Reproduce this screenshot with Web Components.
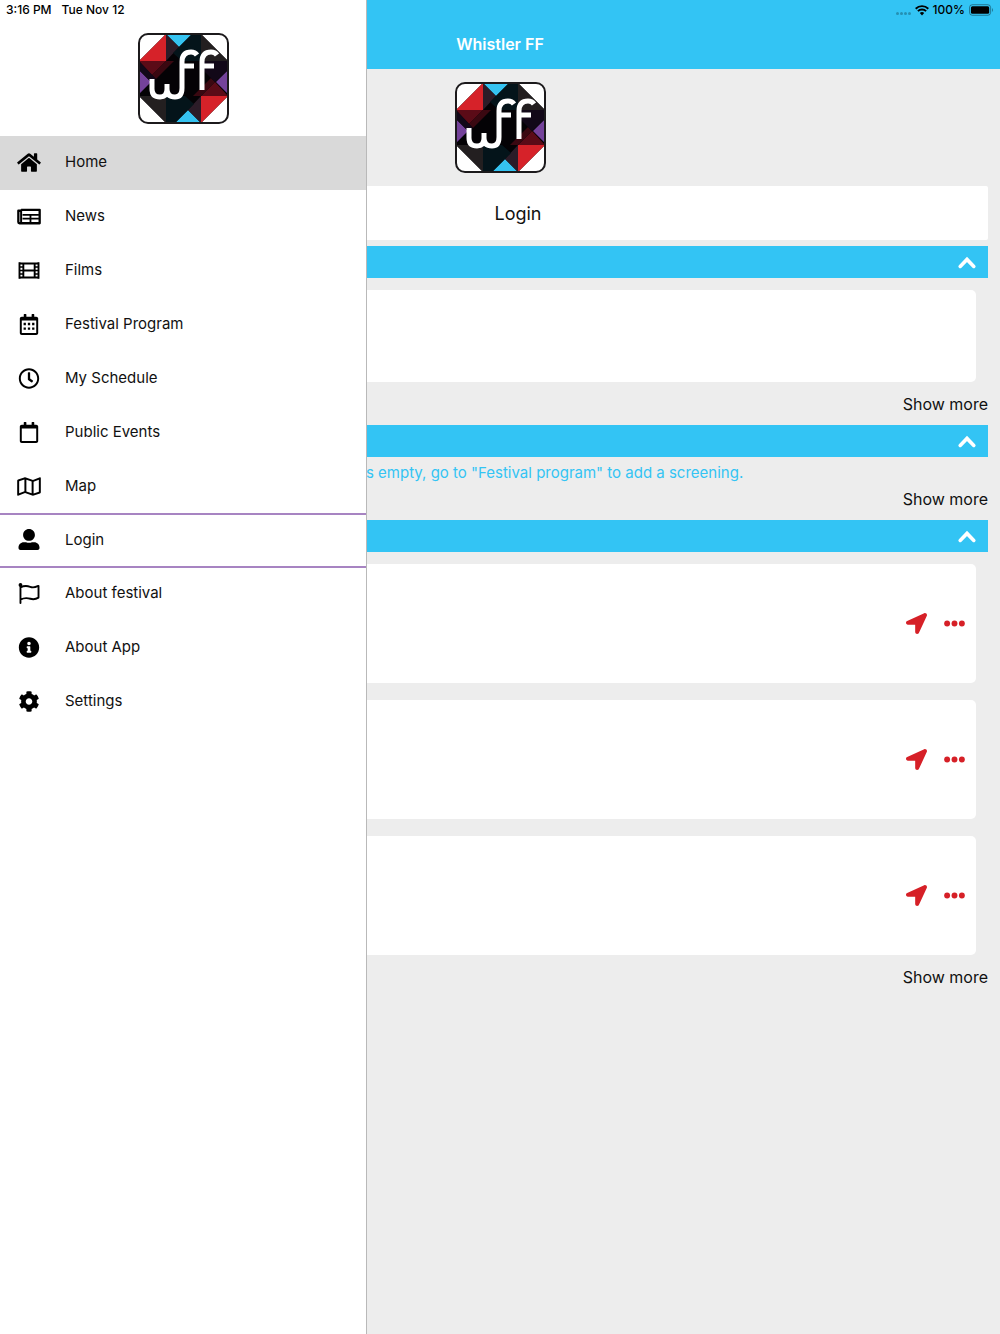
<!DOCTYPE html>
<html lang="en">
<head>
<meta charset="utf-8">
<meta name="viewport" content="width=device-width, initial-scale=1">
<title>Whistler FF</title>
<style>
html, body {
	margin: 0;
	min-height: 100%;
}
body {
	--accent: #33c4f4;
	--action: #d62027;
	--divider: #a784c2;
	background-color: #ededed;
	color: #111;
	font-family: Inter, "Liberation Sans", sans-serif;
	font-size: 16px;
	line-height: 20px;
}
</style>
</head>
<body>
<ff-app>
	<ff-status slot="status"></ff-status>
	<ff-drawer slot="drawer">
		<ff-item icon="home" href="#home" active>Home</ff-item>
		<ff-item icon="news" href="#news">News</ff-item>
		<ff-item icon="film" href="#films">Films</ff-item>
		<ff-item icon="program" href="#program">Festival Program</ff-item>
		<ff-item icon="clock" href="#schedule">My Schedule</ff-item>
		<ff-item icon="calendar" href="#events">Public Events</ff-item>
		<ff-item icon="map" href="#map">Map</ff-item>
		<ff-item icon="user" href="#login" divided>Login</ff-item>
		<ff-item icon="flag" href="#festival">About festival</ff-item>
		<ff-item icon="info" href="#app">About App</ff-item>
		<ff-item icon="cog" href="#settings">Settings</ff-item>
	</ff-drawer>
	<ff-login slot="login">Login</ff-login>
	<ff-section label="News">
		<ff-card></ff-card>
	</ff-section>
	<ff-section label="My Schedule">
		<ff-message>Your schedule is empty, go to "Festival program" to add a screening.</ff-message>
	</ff-section>
	<ff-section label="Public Events">
		<ff-card event></ff-card>
		<ff-card event></ff-card>
		<ff-card event></ff-card>
	</ff-section>
</ff-app>

<script>
'use strict';

const ICONS = {
	home: ['0 0 576 512', '<path d="M280.37 148.26L96 300.11V464a16 16 0 0 0 16 16l112.06-.29a16 16 0 0 0 15.92-16V368a16 16 0 0 1 16-16h64a16 16 0 0 1 16 16v95.64a16 16 0 0 0 16 16.05L464 480a16 16 0 0 0 16-16V300L295.67 148.26a12.19 12.19 0 0 0-15.3 0zM571.6 251.47L488 182.56V44.05a12 12 0 0 0-12-12h-56a12 12 0 0 0-12 12v72.61L318.47 43a48 48 0 0 0-61 0L4.34 251.47a12 12 0 0 0-1.6 16.9l25.5 31A12 12 0 0 0 45.15 301l235.22-193.74a12.19 12.19 0 0 1 15.3 0L530.9 301a12 12 0 0 0 16.9-1.6l25.5-31a12 12 0 0 0-1.7-16.93z"/>'],
	news: ['0 0 576 512', '<path fill="none" stroke="currentColor" stroke-width="56" stroke-linejoin="round" d="M96 92H548V420H56Q28 420 28 392V116H96"/><path fill="none" stroke="currentColor" stroke-width="48" d="M96 92V400"/><path fill="none" stroke="currentColor" stroke-width="44" d="M130 216H530M130 310H530M324 216V400"/>'],
	film: ['0 0 512 512', '<path fill="none" stroke="currentColor" stroke-width="46" d="M24 54V458M488 54V458M118 76V436M394 76V436"/><path fill="none" stroke="currentColor" stroke-width="48" d="M24 86H488M118 256H394M24 426H488"/><path fill="none" stroke="currentColor" stroke-width="34" d="M24 170H118M24 256H118M24 342H118M394 170H488M394 256H488M394 342H488"/>'],
	calendar: ['0 0 448 512', '<path d="M400 64h-48V12c0-6.6-5.4-12-12-12h-40c-6.6 0-12 5.4-12 12v52H160V12c0-6.6-5.4-12-12-12h-40c-6.6 0-12 5.4-12 12v52H48C21.5 64 0 85.5 0 112v352c0 26.5 21.5 48 48 48h352c26.5 0 48-21.5 48-48V112c0-26.5-21.5-48-48-48zm-6 400H54c-3.3 0-6-2.7-6-6V160h352v298c0 3.3-2.7 6-6 6z"/>'],
	clock: ['0 0 512 512', '<path d="M256 8C119 8 8 119 8 256s111 248 248 248 248-111 248-248S393 8 256 8zm0 448c-110.5 0-200-89.5-200-200S145.5 56 256 56s200 89.5 200 200-89.5 200-200 200zm61.8-104.4l-84.9-61.7c-3.1-2.3-4.9-5.9-4.9-9.7V116c0-6.6 5.4-12 12-12h32c6.6 0 12 5.4 12 12v141.7l66.8 48.6c5.4 3.9 6.5 11.4 2.6 16.8L334.6 349c-3.9 5.3-11.4 6.5-16.8 2.6z"/>'],
	map: ['0 0 576 512', '<path d="M560.02 32c-1.96 0-3.98.37-5.96 1.16L384.01 96H384L212 35.28A64.252 64.252 0 0 0 191.76 32c-6.69 0-13.37 1.05-19.81 3.14L20.12 87.95A32.006 32.006 0 0 0 0 117.66v346.32C0 473.17 7.53 480 15.99 480c1.96 0 3.97-.37 5.96-1.16L192 416l172 60.71a63.98 63.98 0 0 0 40.05.15l151.83-52.81A31.996 31.996 0 0 0 576 394.34V48.02c0-9.19-7.53-16.02-15.98-16.02zM224 90.42l128 45.19v285.97l-128-45.19V90.42zM48 418.05V129.07l128-44.53v286.2l-.64.23L48 418.05zm480-35.13l-128 44.53V141.26l.64-.24L528 93.95v288.97z"/>'],
	user: ['0 0 512 512', '<path d="M256 288c79.5 0 144-64.5 144-144S335.5 0 256 0 112 64.5 112 144s64.5 144 144 144zm128 32h-55.1c-22.2 10.2-46.9 16-72.9 16s-50.6-5.8-72.9-16H128C57.3 320 0 377.3 0 448v16c0 26.5 21.5 48 48 48h416c26.5 0 48-21.5 48-48v-16c0-70.7-57.3-128-128-128z"/>'],
	flag: ['0 0 512 512', '<circle cx="48" cy="46" r="46"/><path fill="none" stroke="currentColor" stroke-width="46" stroke-linecap="round" stroke-linejoin="round" d="M48 44V488M48 104C190 40 250 84 320 104C380 120 430 96 488 70V356C400 410 350 402 290 384C220 362 150 350 48 404"/>'],
	info: ['0 0 512 512', '<path d="M256 8C119.043 8 8 119.083 8 256c0 136.997 111.043 248 248 248s248-111.003 248-248C504 119.083 392.957 8 256 8zm0 110c23.196 0 42 18.804 42 42s-18.804 42-42 42-42-18.804-42-42 18.804-42 42-42zm56 254c0 6.627-5.373 12-12 12h-88c-6.627 0-12-5.373-12-12v-24c0-6.627 5.373-12 12-12h12v-64h-12c-6.627 0-12-5.373-12-12v-24c0-6.627 5.373-12 12-12h64c6.627 0 12 5.373 12 12v100h12c6.627 0 12 5.373 12 12v24z"/>'],
	cog: ['0 0 512 512', '<path d="M487.4 315.7l-42.6-24.6c4.3-23.2 4.3-47 0-70.2l42.6-24.6c4.9-2.8 7.1-8.6 5.5-14-11.1-35.6-30-67.8-54.7-94.6-3.8-4.1-10-5.1-14.8-2.3L380.8 110c-17.9-15.4-38.5-27.3-60.8-35.1V25.8c0-5.6-3.9-10.5-9.4-11.7-36.7-8.2-74.3-7.8-109.2 0-5.5 1.2-9.4 6.1-9.4 11.7V75c-22.2 7.9-42.8 19.8-60.8 35.1L88.7 85.5c-4.9-2.8-11-1.9-14.8 2.3-24.7 26.7-43.6 58.9-54.7 94.6-1.7 5.4.6 11.2 5.5 14L67.3 221c-4.3 23.2-4.3 47 0 70.2l-42.6 24.6c-4.9 2.8-7.1 8.6-5.5 14 11.1 35.6 30 67.8 54.7 94.6 3.8 4.1 10 5.1 14.8 2.3l42.6-24.6c17.9 15.4 38.5 27.3 60.8 35.1v49.2c0 5.6 3.9 10.5 9.4 11.7 36.7 8.2 74.3 7.8 109.2 0 5.5-1.2 9.4-6.1 9.4-11.7v-49.2c22.2-7.9 42.8-19.8 60.8-35.1l42.6 24.6c4.9 2.8 11 1.9 14.8-2.3 24.7-26.7 43.6-58.9 54.7-94.6 1.5-5.5-.7-11.3-5.6-14.1zM256 336c-44.1 0-80-35.9-80-80s35.9-80 80-80 80 35.9 80 80-35.9 80-80 80z"/>'],
	arrow: ['0 0 512 512', '<path d="M444.52 3.52L28.74 195.42c-47.97 22.39-31.98 92.75 19.19 92.75h175.91v175.91c0 51.17 70.36 67.17 92.75 19.19l191.9-415.78c15.99-38.39-25.59-79.97-63.97-63.97z"/>'],
	more: ['0 0 512 512', '<circle cx="76" cy="256" r="72"/><circle cx="256" cy="256" r="72"/><circle cx="436" cy="256" r="72"/>'],
	up: ['0 0 24 24', '<path fill="none" stroke="currentColor" stroke-width="3.6" stroke-linecap="round" d="M5.2 16.4L12 9.4L18.8 16.4"/>'],
	wifi: ['0 0 14 11', '<path d="M7 10.4L4.8 8A3.2 3.2 0 0 1 9.2 8Z"/><path fill="none" stroke="currentColor" stroke-width="1.9" d="M2.9 6.2A5.8 5.8 0 0 1 11.1 6.2M.7 3.7A9 9 0 0 1 13.3 3.7"/>'],
	battery: ['0 0 26 12', '<rect x=".5" y=".5" width="22" height="11" rx="3" fill="none" stroke="currentColor" opacity=".4"/><rect x="2" y="2" width="19" height="8" rx="1.6"/><path opacity=".4" d="M24 4Q26 6 24 8Z"/>'],
};
ICONS.program = [ICONS.calendar[0], ICONS.calendar[1] + '<path d="M92 216h56v56H92zM196 216h56v56h-56zM300 216h56v56h-56zM92 328h56v56H92zM196 328h56v56h-56zM300 328h56v56h-56z"/>'];

function define(name, html, setup){
	customElements.define(name, class extends HTMLElement{
		constructor(){
			super();
			this.attachShadow({mode: 'open'}).innerHTML = html;
		}
		connectedCallback(){
			if(setup) setup(this, this.shadowRoot);
		}
	});
}


define('ff-icon', '', (el, root)=>{
	let [box, shape] = ICONS[el.getAttribute('name')];
	root.innerHTML = `
<style>
:host { display: block; width: 24px; height: 21px; }
svg { display: block; width: 100%; height: 100%; fill: currentColor; }
</style>
<svg viewBox="${box}" aria-hidden="true">${shape}</svg>`;
});


define('ff-logo', `
<style>
:host { display: block; width: 91px; height: 91px; }
svg { display: block; width: 100%; height: 100%; }
</style>
<svg viewBox="0 0 91 91" role="img" aria-label="WFF">
	<rect x="1" y="1" width="89" height="89" rx="9" fill="#fff"/>
	<path fill="#040205" d="M28 1H63L90 28V63L63 90H28L1 63V28Z"/>
	<path fill="#d62229" d="M28 1V28H1ZM63 90V63H90Z"/>
	<path fill="#35c3f1" d="M28 1H54L41 14ZM63 90H37L50 77Z"/>
	<path fill="#74429a" d="M1 37V61L13 49ZM90 61V37L78 49Z"/>
	<path fill="#5b0b17" d="M1 28H28L14 42ZM90 63H63L77 49Z"/>
	<path fill="#2c1c28" d="M28 1L41 14L28 28ZM63 90L50 77L63 63Z"/>
	<path fill="#3a0811" d="M28 28L14 42L18 46L36 28ZM63 63L77 49L73 45L55 63Z"/>
	<path fill="#04141a" d="M54 1H63V28H44L35 20ZM37 90H28V63H47L56 71Z"/>
	<path fill="#231f20" d="M63 1L90 28H63ZM28 90L1 63H28Z"/>
	<path fill="#120818" d="M90 28H63V35L77 49L90 37ZM1 28V37L13 49L18 46Z"/>
	<rect x="1" y="1" width="89" height="89" rx="9" fill="none" stroke="#1c1a1c" stroke-width="2"/>
	<g fill="none" stroke="#fff" stroke-width="5">
		<path stroke-linejoin="round" d="M14 46V56Q14 64 22 64Q29 64 29 56V51M29 56Q29 64 37 64Q44 64 44 55V29Q44 19 53 19Q57 19 59 22M44 33H56"/>
		<path d="M64 57V29Q64 19 73 19Q77 19 79 22M64 33H76"/>
	</g>
</svg>`);


define('ff-status', `
<style>
:host { display: flex; justify-content: space-between; align-items: center; height: 20px; padding: 0 6px; font-size: 12px; font-weight: 500; line-height: 20px; color: #000; }
div { display: flex; align-items: center; gap: 4px; }
.time { gap: 10px; }
.signal { color: #2590b3; display: flex; gap: 1px; padding-top: 6px; }
.signal i { width: 3px; height: 3px; border-radius: 2px; background: currentColor; }
.wifi { width: 14px; height: 11px; }
.battery { width: 25px; height: 12px; }
</style>
<div class="time"><span>3:16 PM</span><span>Tue Nov 12</span></div>
<div><span class="signal"><i></i><i></i><i></i><i></i></span><ff-icon class="wifi" name="wifi"></ff-icon><span>100%</span><ff-icon class="battery" name="battery"></ff-icon></div>`);


define('ff-drawer', `
<style>
:host { display: block; box-sizing: border-box; background: #fff; border-right: 1px solid #b9b9b9; color: #111; }
ff-logo { margin: 0 auto; }
header { padding: 33px 0 12px; }
nav { display: flex; flex-direction: column; }
</style>
<header><ff-logo></ff-logo></header>
<nav aria-label="Main menu"><slot></slot></nav>`);


define('ff-item', `
<style>
:host { display: block; font-size: 15px; }
a { display: flex; align-items: center; box-sizing: border-box; height: 54px; padding: 0 17px 2px; gap: 24px; color: inherit; text-decoration: none; }
ff-icon { color: #000; }
:host([active]) a { background: #d9d9d9; }
/* neighbours share the divider line */
:host([divided]) { margin: -1px 0; }
:host([divided]) a { height: 55px; border: solid var(--divider); border-width: 2px 0; }
</style>
<a><span><slot></slot></span></a>`, (el, root)=>{
	let link = root.querySelector('a');
	let icon = document.createElement('ff-icon');
	icon.setAttribute('name', el.getAttribute('icon'));
	link.href = el.getAttribute('href');
	link.prepend(icon);
});


define('ff-login', `
<style>
:host { display: block; }
button { display: block; width: 100%; height: 54px; padding: 2px 0 0 36px; border: 0; border-radius: 2px; background: #fff; color: inherit; font: inherit; font-size: 18px; }
</style>
<button type="button"><slot></slot></button>`);


define('ff-section', `
<style>
:host { display: block; }
.bar { display: flex; justify-content: flex-end; align-items: center; width: 100%; height: 32px; padding: 0 9px; border: 0; background: var(--accent); color: #fff; }
.bar ff-icon { height: 24px; }
footer { display: flex; justify-content: flex-end; padding-bottom: 11px; }
a { color: inherit; text-decoration: none; }
</style>
<button class="bar" type="button" aria-expanded="true"><ff-icon name="up"></ff-icon></button>
<div class="body"><slot></slot></div>
<footer><a href="#more">Show more</a></footer>`, (el, root)=>{
	root.querySelector('.bar').setAttribute('aria-label', el.getAttribute('label'));
});


define('ff-message', `
<style>
:host { display: block; padding: 6px 0; text-align: center; color: var(--accent); font-size: 15px; }
</style>
<slot></slot>`);


define('ff-card', `
<style>
:host { display: flex; justify-content: flex-end; align-items: center; gap: 17px; box-sizing: border-box; height: 92px; margin: 12px; padding: 0 11px; border-radius: 5px; background: #fff; }
:host([event]) { height: 119px; }
:host([event]:not(:first-child)) { margin-top: 17px; }
:host([event]:not(:last-child)) { margin-bottom: 0; }
:host(:not([event])) button { display: none; }
button { padding: 0; border: 0; background: none; color: var(--action); }
ff-icon { width: 21px; height: 21px; }
</style>
<button type="button" aria-label="Show on map"><ff-icon name="arrow"></ff-icon></button>
<button type="button" aria-label="More options"><ff-icon name="more"></ff-icon></button>`);


define('ff-app', `
<style>
:host { display: block; position: relative; min-height: 100vh; }
header { display: flex; justify-content: center; align-items: center; box-sizing: border-box; height: 69px; padding: 20px 0 2px; background: var(--accent); color: #fff; }
h1 { margin: 0; font-size: 16px; font-weight: 600; }
.logo { display: flex; justify-content: center; padding: 13px 0; }
main { display: flex; flex-direction: column; gap: 6px; padding: 0 12px; }
/* the open drawer covers the page, the status bar covers both */
.drawer { position: absolute; top: 0; bottom: 0; left: 0; width: 367px; max-width: 85%; display: grid; }
.status { position: absolute; top: 0; left: 0; right: 0; }
</style>
<header><h1>Whistler FF</h1></header>
<div class="logo"><ff-logo></ff-logo></div>
<main><slot name="login"></slot><div><slot></slot></div></main>
<div class="drawer"><slot name="drawer"></slot></div>
<div class="status"><slot name="status"></slot></div>`);
</script>
</body>
</html>
